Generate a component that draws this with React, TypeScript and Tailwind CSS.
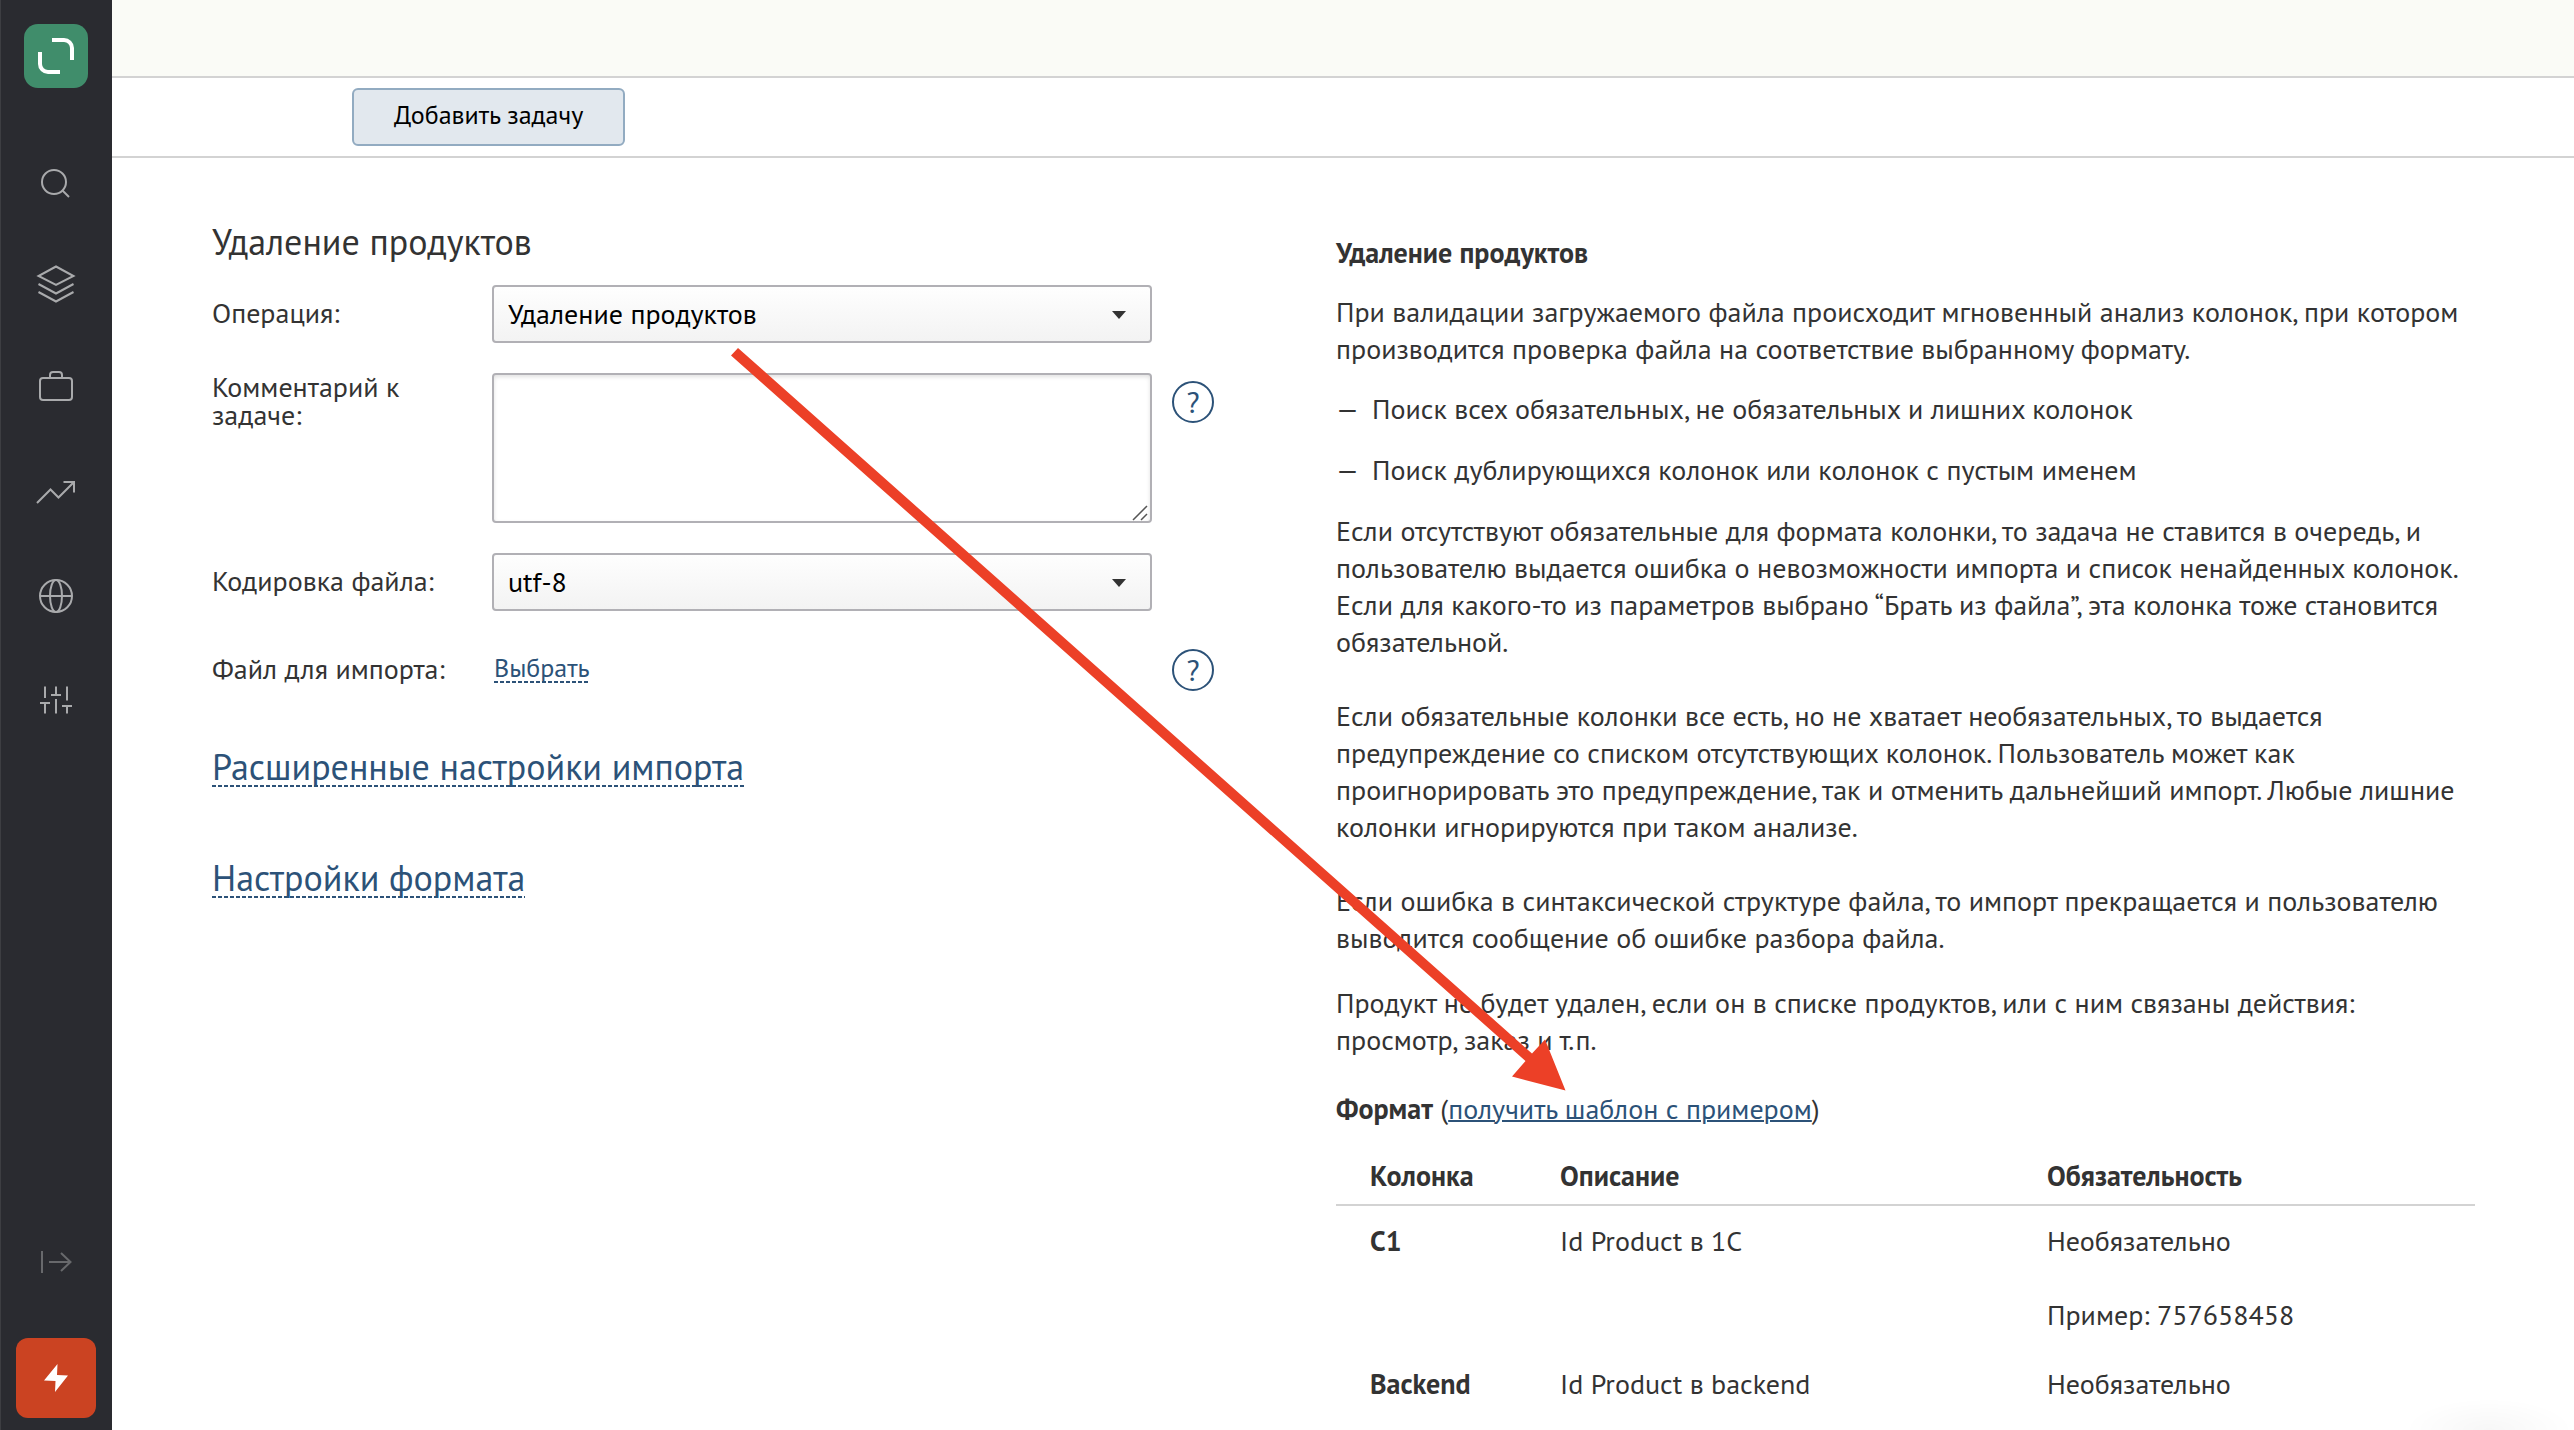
import { useState } from "react";
import type { ReactNode } from "react";

const navItems: { label: string; icon: ReactNode }[] = [
  {
    label: "Поиск",
    icon: (
      <>
        <circle cx="18" cy="22" r="12" />
        <path d="M26.5 30.5 33 37" />
      </>
    ),
  },
  {
    label: "Продукты",
    icon: (
      <>
        <path d="M20 2.5 37.5 12 20 21 2.5 12Z" />
        <path d="M2.5 20 20 29.5 37.5 20" />
        <path d="M2.5 28 20 37.5 37.5 28" />
      </>
    ),
  },
  {
    label: "Кампании",
    icon: (
      <>
        <rect x="4" y="10" width="32" height="22" rx="3" />
        <path d="M14 10V7a3 3 0 0 1 3-3h6a3 3 0 0 1 3 3v3" />
      </>
    ),
  },
  {
    label: "Аналитика",
    icon: (
      <>
        <path d="M1 31 14.5 17.5 22.5 25.5 38 10" />
        <path d="M27.5 10H38V20.5" />
      </>
    ),
  },
  {
    label: "Интеграции",
    icon: (
      <>
        <circle cx="20" cy="20" r="16" />
        <ellipse cx="20" cy="20" rx="6" ry="16" />
        <path d="M4 20H36" />
      </>
    ),
  },
  {
    label: "Настройки",
    icon: (
      <path d="M9 6.5V18M4 23H14M9 23V33.5M20 6.5V15M15 15H25M20 19V33.5M31 6.5V20.5M26 26H36M31 26V33.5" />
    ),
  },
];

const formatRows = [
  { column: "C1", description: "Id Product в 1С", required: "Необязательно", example: "757658458" },
  { column: "Backend", description: "Id Product в backend", required: "Необязательно", example: "" },
];

const dashedClass =
  "cursor-pointer bg-[repeating-linear-gradient(90deg,#2c5278_0_4px,transparent_4px_6px)] bg-[length:100%_2px] bg-bottom bg-no-repeat text-[#2c5278]";

function Sidebar() {
  return (
    <aside className="sticky top-0 flex h-screen w-28 shrink-0 flex-col items-center bg-[#2a2b30] pt-6 pb-3 shadow-[inset_1px_0_0_#3d3e42]">
      <a href="#" aria-label="Главная">
        <svg viewBox="0 0 64 64" className="h-16 w-16 rounded-[14px] bg-[#408d6b]" fill="none" stroke="#fff" strokeWidth="4">
          <path d="M28 16h12a8 8 0 0 1 8 8v12" />
          <path d="M16 28v12a8 8 0 0 0 8 8h12" />
        </svg>
      </a>

      <nav className="mt-10 flex w-full flex-col">
        {navItems.map((item) => (
          <a key={item.label} href="#" aria-label={item.label} className="flex h-[104px] items-center justify-center">
            <svg viewBox="0 0 40 40" className="h-10 w-10" fill="none" stroke="#a9aaac" strokeWidth="2">
              {item.icon}
            </svg>
          </a>
        ))}
      </nav>

      <button aria-label="Развернуть меню" className="mt-auto cursor-pointer">
        <svg viewBox="0 0 40 40" className="h-10 w-10" fill="none" stroke="#68696c" strokeWidth="2">
          <path d="M6 9V31M13 20H34.5M25 11 34.5 20 25 29" />
        </svg>
      </button>
      <button aria-label="Быстрые действия" className="mt-14 cursor-pointer">
        <svg viewBox="0 0 80 80" className="h-20 w-20 rounded-[12px] bg-[#cb4322]">
          <path fill="#fff" d="M41.5 26 28 42.5 39.5 43 39 54 52 37.5 41 37Z" />
        </svg>
      </button>
    </aside>
  );
}

function FormRow({ label, htmlFor, help, children }: { label: ReactNode; htmlFor: string; help?: boolean; children: ReactNode }) {
  return (
    <div className="flex items-start">
      <label htmlFor={htmlFor} className="w-[280px] shrink-0 leading-7">
        {label}
      </label>
      <div className="relative w-[660px]">{children}</div>
      {help && (
        <button
          type="button"
          aria-label="Справка"
          className="mt-2 ml-5 flex h-[42px] w-[42px] shrink-0 cursor-pointer items-center justify-center rounded-full border-2 border-[#2c5278] text-[30px] leading-none text-[#2c5278]"
        >
          ?
        </button>
      )}
    </div>
  );
}

function Select({ id, options }: { id: string; options: string[] }) {
  const [value, setValue] = useState(options[0]);

  return (
    <>
      <select
        id={id}
        value={value}
        onChange={(e) => setValue(e.target.value)}
        className="block h-[58px] w-full appearance-none rounded-[4px] border-2 border-[#b1b0b5] bg-gradient-to-b from-[#fefefe] to-[#f3f3f3] px-3.5 text-black"
      >
        {options.map((option) => (
          <option key={option}>{option}</option>
        ))}
      </select>
      <svg viewBox="0 0 14 8" className="pointer-events-none absolute top-[26px] right-[26px] h-2 w-3.5">
        <path d="M0 0H14L7 8Z" fill="#333" />
      </svg>
    </>
  );
}

function ImportForm() {
  const [comment, setComment] = useState("");

  return (
    <form className="flex flex-col items-start pt-16">
      <h1 className="mb-[23px] text-4xl leading-10">Удаление продуктов</h1>

      <div className="flex flex-col gap-[30px]">
        <FormRow label={<span className="block pt-3.5">Операция:</span>} htmlFor="operation">
          <Select id="operation" options={["Удаление продуктов", "Импорт продуктов"]} />
        </FormRow>

        <FormRow label={<span className="block pr-16">Комментарий к задаче:</span>} htmlFor="comment" help>
          <textarea
            id="comment"
            value={comment}
            onChange={(e) => setComment(e.target.value)}
            className="block h-[150px] w-full resize-none rounded-[4px] border-2 border-[#b1b0b5] bg-white px-3.5 py-2 shadow-[inset_0_2px_4px_#0000001f]"
          />
          <svg viewBox="0 0 16 16" className="pointer-events-none absolute right-1 bottom-0.5 h-4 w-4" fill="none" stroke="#555" strokeWidth="1.5">
            <path d="M1 15 15 1M9 15 15 9" />
          </svg>
        </FormRow>

        <FormRow label={<span className="block pt-3.5">Кодировка файла:</span>} htmlFor="encoding">
          <Select id="encoding" options={["utf-8", "windows-1251"]} />
        </FormRow>

        <FormRow label={<span className="block pt-3.5">Файл для импорта:</span>} htmlFor="file" help>
          <button id="file" type="button" className={`${dashedClass} mx-0.5 mt-3 block text-[26px] leading-[30px]`}>
            Выбрать
          </button>
        </FormRow>
      </div>

      <div className="mt-14 flex flex-col items-start gap-[71px]">
        <button type="button" className={`${dashedClass} text-4xl leading-10`}>
          Расширенные настройки импорта
        </button>
        <button type="button" className={`${dashedClass} text-4xl leading-10`}>
          Настройки формата
        </button>
      </div>
    </form>
  );
}

function FormatHelp() {
  return (
    <section className="pt-[76px] leading-[37px]">
      <h2 className="mb-[22px] font-bold">Удаление продуктов</h2>
      <p>
        При валидации загружаемого файла происходит мгновенный анализ колонок, при котором производится проверка файла
        на соответствие выбранному формату.
      </p>
      <ul className="mt-[23px] mb-6 flex flex-col gap-6">
        {[
          "Поиск всех обязательных, не обязательных и лишних колонок",
          "Поиск дублирующихся колонок или колонок с пустым именем",
        ].map((text) => (
          <li key={text} className="flex">
            <span className="w-9">—</span>
            {text}
          </li>
        ))}
      </ul>
      <div className="flex flex-col gap-[37px]">
        <p>
          Если отсутствуют обязательные для формата колонки, то задача не ставится в очередь, и пользователю выдается
          ошибка о невозможности импорта и список ненайденных колонок. Если для какого-то из параметров выбрано “Брать
          из файла”, эта колонка тоже становится обязательной.
        </p>
        <p>
          Если обязательные колонки все есть, но не хватает необязательных, то выдается предупреждение со списком
          отсутствующих колонок. Пользователь может как проигнорировать это предупреждение, так и отменить дальнейший
          импорт. Любые лишние колонки игнорируются при таком анализе.
        </p>
        <p>
          Если ошибка в синтаксической структуре файла, то импорт прекращается и пользователю выводится сообщение об
          ошибке разбора файла.
        </p>
      </div>
      <p className="mt-7">
        Продукт не будет удален, если он в списке продуктов, или с ним связаны действия: просмотр, заказ и т.п.
      </p>
      <p className="mt-8">
        <b>Формат</b> (
        <a href="#" className="text-[#2c5278] underline decoration-2">
          получить шаблон с примером
        </a>
        )
      </p>

      <table className="mt-3.5 w-full table-fixed border-separate border-spacing-0 text-left">
        <thead>
          <tr>
            <th className="w-[190px] border-b-2 border-[#d3d3d3] pt-4 pb-2.5 pl-[34px]">Колонка</th>
            <th className="w-[487px] border-b-2 border-[#d3d3d3] pt-4 pb-2.5 pl-[34px]">Описание</th>
            <th className="border-b-2 border-[#d3d3d3] pt-4 pb-2.5 pl-[34px]">Обязательность</th>
          </tr>
        </thead>
        <tbody>
          {formatRows.map((row) => (
            <tr key={row.column}>
              <th className="py-4 pl-[34px] align-top">{row.column}</th>
              <td className="py-4 pl-[34px] align-top">{row.description}</td>
              <td className="py-4 pl-[34px] align-top">
                {row.required}
                {row.example && <p className="mt-[37px]">Пример: {row.example}</p>}
              </td>
            </tr>
          ))}
        </tbody>
      </table>
    </section>
  );
}

// points from the operation select to the template link
function Pointer() {
  return (
    <svg viewBox="0 0 835 743" className="pointer-events-none absolute top-[348px] left-[619px] h-[743px] w-[835px]" fill="#ec4027">
      <path d="M7 0 801 705.5 814 691.5 834.5 742.5 781 728.5 794.5 713 0 7.5Z" />
    </svg>
  );
}

export default function App() {
  return (
    <div className="flex min-h-screen bg-white font-['PT_Sans','Noto_Sans',sans-serif] text-[28px] text-[#333]">
      <Sidebar />

      <main className="relative min-w-0 flex-1">
        <header className="h-[78px] border-b-2 border-[#d3d3d3] bg-[#fafbf6]" />

        <div className="flex h-20 items-start border-b-2 border-[#d3d3d3] px-60 pt-2.5">
          <button className="h-[58px] cursor-pointer rounded-[6px] border-2 border-[#92abc1] bg-[#e2e8ee] px-10 pb-1.5 text-[26px] text-black">
            Добавить задачу
          </button>
        </div>

        <div className="grid grid-cols-[1124fr_1139fr] pr-[99px] pl-[100px]">
          <ImportForm />
          <FormatHelp />
        </div>

        <Pointer />
      </main>

      <div className="pointer-events-none fixed right-0 bottom-0 h-8 w-[170px] bg-[radial-gradient(ellipse_at_bottom,#00000008,transparent_70%)]" />
    </div>
  );
}
